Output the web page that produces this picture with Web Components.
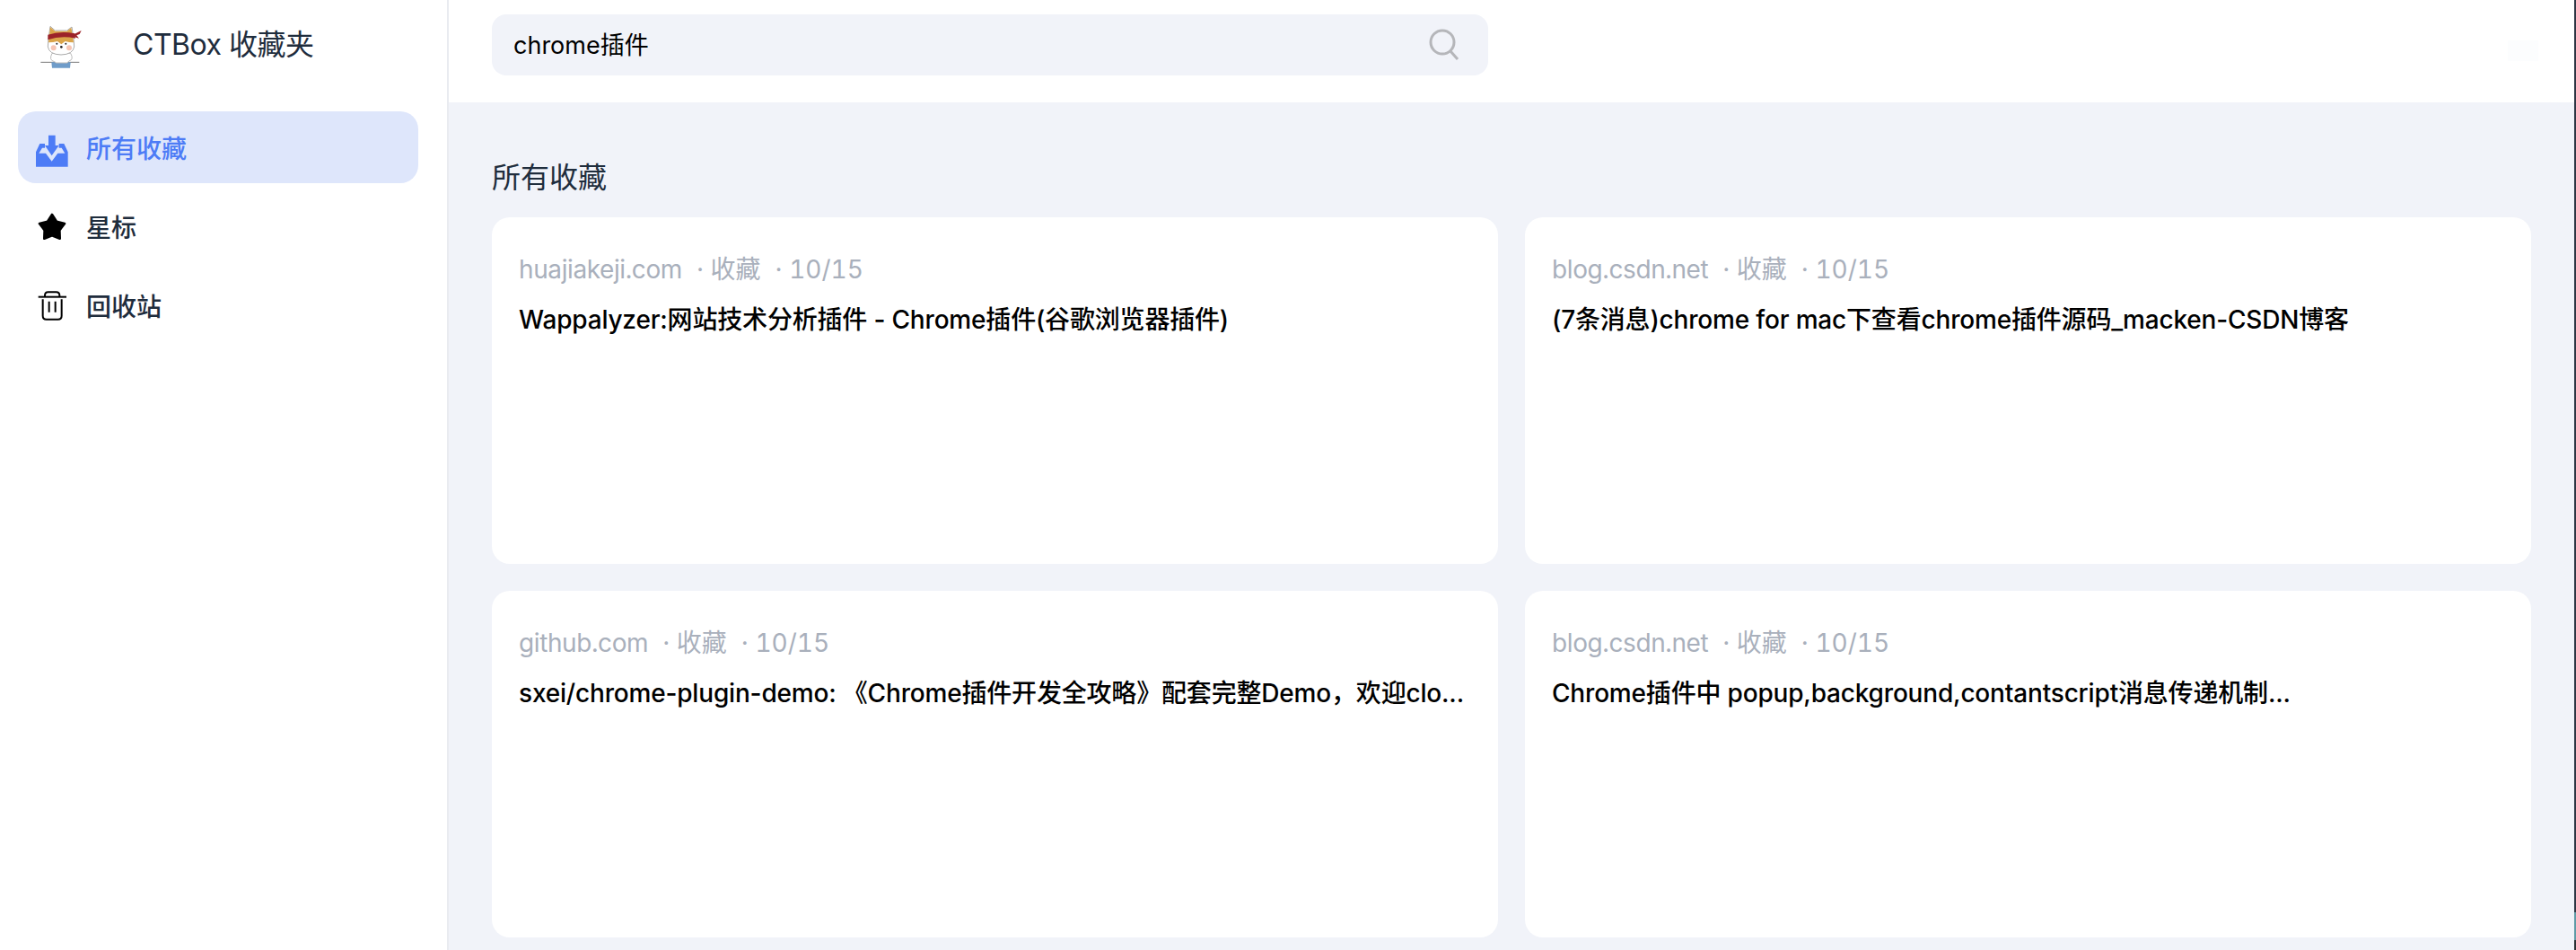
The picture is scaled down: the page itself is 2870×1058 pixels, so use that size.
<!DOCTYPE html>
<html lang="zh">
<head>
<meta charset="utf-8">
<title>CTBox 收藏夹</title>
<style>
    html, body {
        margin: 0;
        height: 100%;
        overflow: hidden;
        background: #ffffff;
        font-family: Inter, "Noto Sans CJK SC", sans-serif;
    }
</style>
</head>
<body>
<ct-app>
    <ct-sidebar slot="sidebar">
        <ct-nav-item icon="inbox" active>所有收藏</ct-nav-item>
        <ct-nav-item icon="star">星标</ct-nav-item>
        <ct-nav-item icon="trash">回收站</ct-nav-item>
    </ct-sidebar>
    <ct-search slot="header" value="chrome插件"></ct-search>
    <ct-card domain="huajiakeji.com" date="10/15">Wappalyzer:网站技术分析插件 - Chrome插件(谷歌浏览器插件)</ct-card>
    <ct-card domain="blog.csdn.net" date="10/15">(7条消息)chrome for mac下查看chrome插件源码_macken-CSDN博客</ct-card>
    <ct-card domain="github.com" date="10/15">sxei/chrome-plugin-demo: 《Chrome插件开发全攻略》配套完整Demo，欢迎clo...</ct-card>
    <ct-card domain="blog.csdn.net" date="10/15">Chrome插件中 popup,background,contantscript消息传递机制...</ct-card>
</ct-app>

<script>
const ICONS = {
    inbox: `<svg viewBox="0 0 180 180" width="60" height="60">
        <path fill="#4d7cf6" d="M87 50H110V84H122L98 118L75 84H87Z"/>
        <path fill="#4d7cf6" d="M45 155V106L58 78H75V92H66L55 110H78L98 137L118 110H142L131 92H122V78H139L152 106V155Z"/>
    </svg>`,
    star: `<svg viewBox="0 0 180 180" width="60" height="60">
        <path fill="#000" stroke="#000" stroke-width="8" stroke-linejoin="round" d="M99 51L114 74L141 81L124 103L125 131L99 121L73 131L74 103L57 81L84 74Z"/>
    </svg>`,
    trash: `<svg viewBox="0 0 180 180" width="60" height="60">
        <g transform="translate(15 15)" fill="none" stroke="#000" stroke-width="6">
            <path d="M38 47H132"/>
            <path d="M60 47V42Q60 31 71 31H98Q109 31 109 42V47"/>
            <path d="M53 55V110Q53 122 65 122H104Q116 122 116 110V55"/>
            <path d="M74 62V98M95 62V98"/>
        </g>
    </svg>`
};

class CtLogo extends HTMLElement {
    constructor() {
        super();
        this.attachShadow({ mode: 'open' });
        // shiba with a headband, coordinates taken from a 3x crop
        this.shadowRoot.innerHTML = `
            <style>
                :host { display: block; width: 100px; height: 80px; }
                svg { display: block; filter: blur(0.5px); }
            </style>
            <svg viewBox="0 0 300 240" width="100" height="80">
                <path d="M76 178H205" stroke="#777" stroke-width="3"/>
                <path d="M112 178H176L174 197H114Z" fill="#6f9cc9"/>
                <path d="M114 148Q102 172 122 176L128 180H165L170 174Q188 170 176 148Z" fill="#fff" stroke="#bbb" stroke-width="3"/>
                <path d="M108 58L124 72H164L180 60L186 100L188 126Q184 152 144 153Q104 152 100 126L102 100Z" fill="#fff" stroke="#aaa" stroke-width="3"/>
                <path d="M108 60L124 74H164L178 62L184 96L186 112Q170 112 158 108L145 118L132 108Q118 112 102 112L104 96Z" fill="#dba54a"/>
                <path d="M100 86Q144 72 190 82L192 98Q144 88 100 103Z" fill="#9c2329"/>
                <path d="M188 84L212 72L206 84L196 88L204 98L190 94Z" fill="#9c2329"/>
                <circle cx="119" cy="130" r="9" fill="#f6c5b4"/>
                <circle cx="171" cy="130" r="9" fill="#f6c5b4"/>
                <circle cx="130" cy="116" r="3" fill="#222"/>
                <circle cx="160" cy="116" r="3" fill="#222"/>
                <circle cx="145" cy="127" r="4" fill="#222"/>
            </svg>
        `;
    }
}

class CtNavItem extends HTMLElement {
    constructor() {
        super();
        this.attachShadow({ mode: 'open' });
        this.shadowRoot.innerHTML = `
            <style>
                :host {
                    display: flex;
                    align-items: center;
                    gap: 11px;
                    height: 80px;
                    padding-left: 5px;
                    border-radius: 20px;
                    font-size: 28px;
                    font-weight: 500;
                    color: #1f2d3d;
                    cursor: pointer;
                }
                :host([active]) {
                    background: #dee6fb;
                    color: #4d7cf6;
                }
                svg { display: block; }
            </style>
            ${ICONS[this.getAttribute('icon')]}
            <slot></slot>
        `;
    }
}

class CtSidebar extends HTMLElement {
    constructor() {
        super();
        this.attachShadow({ mode: 'open' });
        this.shadowRoot.innerHTML = `
            <style>
                :host {
                    display: block;
                    box-sizing: border-box;
                    width: 500px;
                    height: 100%;
                    padding: 10px 32px 0 20px;
                    background: #fff;
                    border-right: 2px solid #e9ebf0;
                }
                .brand {
                    display: flex;
                    align-items: center;
                    gap: 28px;
                    margin-bottom: 34px;
                    font-size: 32px;
                    letter-spacing: -0.5px;
                    color: #1f2d3d;
                }
                .brand span { margin-top: -6px; }
                nav {
                    display: flex;
                    flex-direction: column;
                    gap: 8px;
                }
            </style>
            <div class="brand"><ct-logo></ct-logo><span>CTBox 收藏夹</span></div>
            <nav><slot></slot></nav>
        `;
    }
}

class CtSearch extends HTMLElement {
    constructor() {
        super();
        this.attachShadow({ mode: 'open' });
        this.shadowRoot.innerHTML = `
            <style>
                :host {
                    display: flex;
                    align-items: center;
                    box-sizing: border-box;
                    width: 1110px;
                    height: 68px;
                    padding: 0 31px 0 24px;
                    border-radius: 16px;
                    background: #f1f3f9;
                }
                span {
                    flex: 1;
                    margin-top: -4px;
                    font-size: 27px;
                    color: #000;
                }
                svg { display: block; }
            </style>
            <span></span>
            <svg viewBox="0 0 36 36" width="36" height="36" fill="none" stroke="#b5b6ba" stroke-width="3">
                <circle cx="16" cy="15" r="13"/>
                <path d="M25 25L33 34"/>
            </svg>
        `;
        this.shadowRoot.querySelector('span').innerText = this.getAttribute('value');
    }
}

class CtCard extends HTMLElement {
    constructor() {
        super();
        this.attachShadow({ mode: 'open' });
        this.shadowRoot.innerHTML = `
            <style>
                :host {
                    display: block;
                    box-sizing: border-box;
                    height: 386px;
                    padding: 38px 30px 0;
                    border-radius: 20px;
                    background: #fff;
                }
                .meta {
                    display: flex;
                    height: 40px;
                    line-height: 40px;
                    font-size: 28px;
                    color: #a9b0bc;
                    white-space: pre;
                    font-variant-numeric: tabular-nums;
                }
                .meta span + span { margin-left: 16px; }
                .domain { letter-spacing: -0.4px; }
                .title {
                    margin-top: 16px;
                    height: 40px;
                    line-height: 40px;
                    font-size: 28px;
                    font-weight: 500;
                    letter-spacing: -0.18px;
                    color: #000;
                    white-space: nowrap;
                    overflow: hidden;
                }
            </style>
            <div class="meta"><span class="domain"></span><span>· 收藏</span><span class="date"></span></div>
            <div class="title"><slot></slot></div>
        `;
        this.shadowRoot.querySelector('.domain').innerText = this.getAttribute('domain');
        this.shadowRoot.querySelector('.date').innerText = '· ' + this.getAttribute('date');
    }
}

class CtApp extends HTMLElement {
    constructor() {
        super();
        this.attachShadow({ mode: 'open' });
        this.shadowRoot.innerHTML = `
            <style>
                :host {
                    display: flex;
                    height: 1058px;
                    background: #2e3644;
                }
                .window {
                    flex: 1;
                    display: flex;
                    min-width: 0;
                    background: #fff;
                }
                .edge {
                    width: 2px;
                    background: linear-gradient(#2e3644 0 96%, #5f9aa6 96% 99%, #2b2f33 99%);
                }
                main {
                    flex: 1;
                    display: flex;
                    flex-direction: column;
                    min-width: 0;
                    background: #f1f3f9;
                }
                header {
                    display: flex;
                    align-items: center;
                    justify-content: space-between;
                    height: 114px;
                    padding: 0 40px 14px 48px;
                    box-sizing: border-box;
                    background: #fff;
                }
                .faint {
                    width: 34px;
                    height: 23px;
                    margin-top: 12px;
                    background: #fcfdfe;
                }
                section {
                    padding: 62px 48px 0;
                }
                h2 {
                    margin: 0 0 22px;
                    font-size: 32px;
                    line-height: 44px;
                    font-weight: 400;
                    color: #1f2d3d;
                }
                .grid {
                    display: grid;
                    grid-template-columns: minmax(0, 1fr) minmax(0, 1fr);
                    gap: 30px;
                }
            </style>
            <div class="window">
                <slot name="sidebar"></slot>
                <main>
                    <header><slot name="header"></slot><div class="faint"></div></header>
                    <section>
                        <h2>所有收藏</h2>
                        <div class="grid"><slot></slot></div>
                    </section>
                </main>
            </div>
            <div class="edge"></div>
        `;
    }
}

window.customElements.define('ct-logo', CtLogo);
window.customElements.define('ct-nav-item', CtNavItem);
window.customElements.define('ct-sidebar', CtSidebar);
window.customElements.define('ct-search', CtSearch);
window.customElements.define('ct-card', CtCard);
window.customElements.define('ct-app', CtApp);
</script>
</body>
</html>
